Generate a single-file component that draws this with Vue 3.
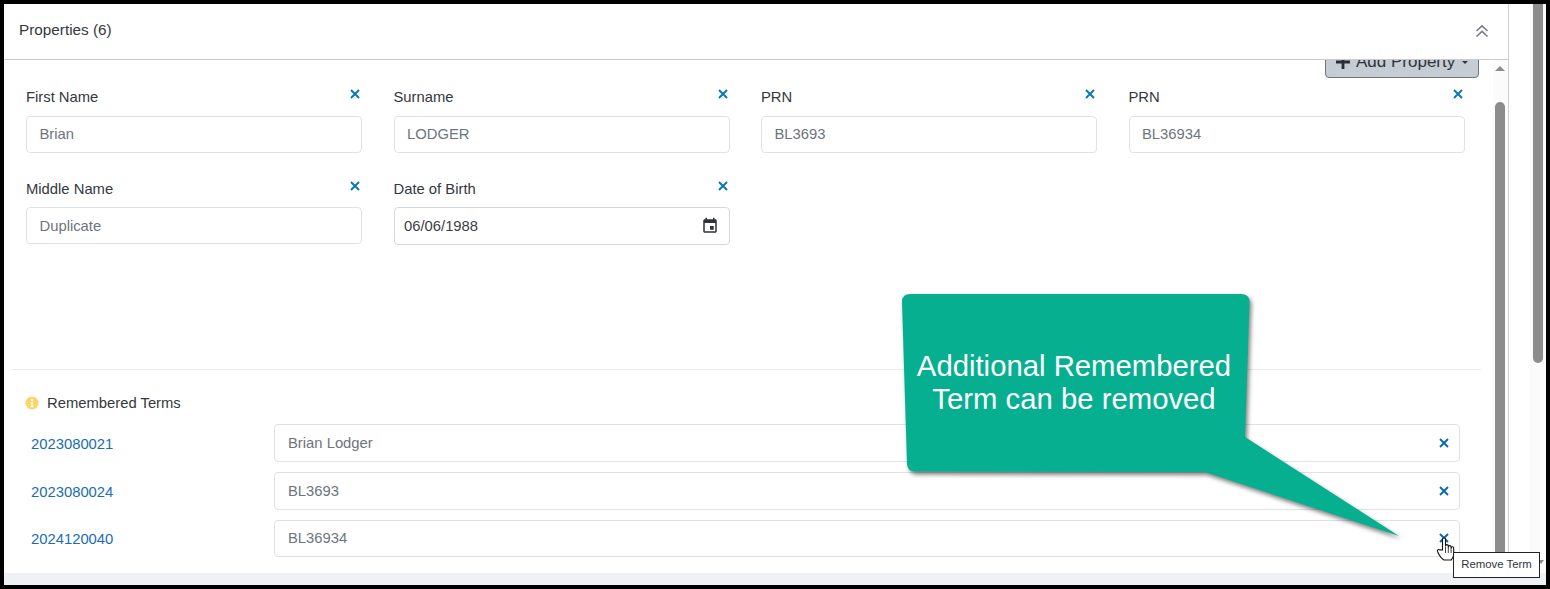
<script setup>
const fields = [
  { label: 'First Name', value: 'Brian' },
  { label: 'Surname', value: 'LODGER' },
  { label: 'PRN', value: 'BL3693' },
  { label: 'PRN', value: 'BL36934' },
  { label: 'Middle Name', value: 'Duplicate' },
  { label: 'Date of Birth', value: '06/06/1988', date: true }
]
const terms = [
  { id: '2023080021', value: 'Brian Lodger' },
  { id: '2023080024', value: 'BL3693' },
  { id: '2024120040', value: 'BL36934' }
]
</script>

<template>
  <div class="frame">
    <div class="top">
      <section class="panel">
        <header class="head">
          <span class="title">Properties (6)</span>
          <svg class="chev" width="14" height="14" viewBox="0 0 14 14" fill="none" stroke="#7a7f85" stroke-width="1.6">
            <path d="M1.5 7 7 1.8 12.5 7" />
            <path d="M1.5 12.5 7 7.3 12.5 12.5" />
          </svg>
        </header>
        <div class="body">
          <div class="content">
            <div class="tools">
              <button class="add">
                <svg width="14" height="14" viewBox="0 0 14 14"><path d="M5.6 0h2.8v5.6H14v2.8H8.4V14H5.6V8.4H0V5.6h5.6z" fill="#2b2f33" /></svg>
                <span>Add Property</span>
                <i class="caret"></i>
              </button>
            </div>
            <div class="grid">
              <div v-for="(f, i) in fields" :key="i" class="field">
                <div class="label">
                  <span>{{ f.label }}</span>
                  <svg class="x" width="10" height="10" viewBox="0 0 10 10"><path d="M1 1l8 8M9 1 1 9" stroke="#0a78b8" stroke-width="2" /></svg>
                </div>
                <div class="input" :class="{ date: f.date }">
                  <span>{{ f.value }}</span>
                  <svg v-if="f.date" width="18" height="18" viewBox="0 0 24 24"><path d="M17 12h-5v5h5v-5zM16 1v2H8V1H6v2H5c-1.11 0-1.99.9-1.99 2L3 19c0 1.1.89 2 2 2h14c1.1 0 2-.9 2-2V5c0-1.1-.9-2-2-2h-1V1h-2zm3 18H5V8h14v11z" fill="#2f3336" /></svg>
                </div>
              </div>
            </div>
            <hr class="rule" />
            <div class="terms-title">
              <svg width="14" height="14" viewBox="0 0 14 14">
                <circle cx="7" cy="7" r="6.5" fill="#ffd466" />
                <circle cx="7" cy="4" r="1.2" fill="#fff" />
                <path d="M5.6 6h2.2v4h.9v1.2H5.400V10h.9V7.100h-.7z" fill="#fff" />
              </svg>
              <span>Remembered Terms</span>
            </div>
            <div class="terms">
              <div v-for="t in terms" :key="t.id" class="term">
                <a class="link">{{ t.id }}</a>
                <div class="input term-input">
                  <span>{{ t.value }}</span>
                  <svg width="10" height="10" viewBox="0 0 10 10"><path d="M1 1l8 8M9 1 1 9" stroke="#0a6cae" stroke-width="2" /></svg>
                </div>
              </div>
            </div>
          </div>
          <div class="vbar">
            <i class="up"></i>
            <i class="thumb"></i>
          </div>
        </div>
      </section>
      <aside class="gutter">
        <i class="outer-thumb"></i>
        <i class="down"></i>
      </aside>
    </div>
    <div class="foot"></div>

    <svg class="callout" width="520" height="270" viewBox="900 290 520 270">
      <defs>
        <filter id="sh" x="-5%" y="-5%" width="115%" height="120%" color-interpolation-filters="sRGB">
          <feDropShadow dx="2" dy="3" stdDeviation="2.2" flood-color="#000" flood-opacity=".5" />
        </filter>
      </defs>
      <path d="M910 294H1241Q1249.500 294 1249.500 302L1245 437 1399 536 1205 472 915 471.500Q907.500 471.500 907 464L902 302Q902 294 910 294Z" fill="#07af91" filter="url(#sh)" />
    </svg>
    <div class="callout-text">Additional Remembered<br />Term can be removed</div>

    <svg class="hand" width="20" height="26" viewBox="0 0 20 26">
      <path d="M6.500 14V3.500a1.500 1.500 0 0 1 3 0V10a1.400 1.400 0 0 1 2.800 0v1a1.400 1.400 0 0 1 2.800 0v1a1.300 1.300 0 0 1 2.600 0v6c0 3-1 4.500-2.500 6H8C6 23 3.500 20 1.500 15.500c-.6-1.500 1-2.600 2.200-1.600z" fill="#fff" stroke="#111" stroke-width="1.100" stroke-linejoin="round" />
      <path d="M9.500 11v6M12.300 11v6M15.100 12v5" stroke="#111" stroke-width=".8" fill="none" />
    </svg>
    <div class="tip">Remove Term</div>
  </div>
</template>

<style>
html, body { margin: 0; background: #fff; }
</style>

<style scoped>
.frame {
  position: relative;
  box-sizing: border-box;
  width: 1550px;
  height: 589px;
  border: 4px solid #000;
  display: flex;
  flex-direction: column;
  overflow: hidden;
  background: #fff;
  font: 14.8px "Liberation Sans", Arial, sans-serif;
  color: #33383d;
}
.top { flex: 1; min-height: 0; display: flex; }
.panel {
  box-sizing: border-box;
  width: 1505px;
  border-right: 1px solid #c9d0da;
  display: flex;
  flex-direction: column;
}
.head {
  box-sizing: border-box;
  height: 56px;
  flex: none;
  padding: 0 19px 4px 15px;
  display: flex;
  align-items: center;
  justify-content: space-between;
  border-bottom: 1px solid #c8ccd2;
  position: relative;
  z-index: 1;
  background: #fff;
}
.title { font-size: 15.300px; }
.chev { margin-top: 2px; }
.body { flex: 1; min-height: 0; display: flex; overflow: hidden; }
.content { width: 1489px; flex: none; }
.tools { display: flex; justify-content: flex-end; padding-right: 14px; margin-top: -16px; }
.add {
  box-sizing: border-box;
  width: 154px;
  height: 34px;
  display: flex;
  align-items: center;
  gap: 6px;
  padding: 2px 0 0 10px;
  background: #c6ccd4;
  border: 1px solid #6f7680;
  border-radius: 4px;
  font: 17px "Liberation Sans", Arial, sans-serif;
  color: #30353a;
}
.caret {
  border: 3px solid transparent;
  border-top-color: #30353a;
  border-bottom: 0;
  margin-left: 1px;
}
.grid {
  margin: 7px 28.500px 0 22px;
  display: grid;
  grid-template-columns: repeat(4, 336px);
  column-gap: 31.500px;
  row-gap: 24px;
}
.label {
  height: 24px;
  margin-bottom: 6.500px;
  display: flex;
  justify-content: space-between;
  align-items: center;
  padding-right: 2px;
}
.label .x { align-self: flex-start; margin-top: 4px; }
.input {
  box-sizing: border-box;
  height: 37px;
  padding: 0 13px 0 12.500px;
  border: 1px solid #dfe2e6;
  border-radius: 4px;
  display: flex;
  align-items: center;
  justify-content: space-between;
  color: #6c757d;
  background: #fff;
}
.date { height: 38px; padding: 0 10px 0 9.500px; color: #3a3f44; border-color: #d6d9dc; }
.rule { margin: 124px 12px 0 7px; border: 0; border-top: 1px solid #e9ebee; height: 0; }
.terms-title {
  display: flex;
  align-items: center;
  gap: 8px;
  margin: 24px 0 0 21px;
  height: 18px;
}
.terms {
  margin: 12px 33px 0 27px;
  display: flex;
  flex-direction: column;
  gap: 10px;
}
.term { display: flex; align-items: center; }
.link { width: 243px; flex: none; color: #1a6db5; padding-top: 1px; }
.term:last-child .link { padding-top: 0; }
.term-input { flex: 1; height: 38px; padding: 0 10px 0 13px; }
.term:last-child .term-input { height: 37px; padding-bottom: 1px; }
.vbar {
  flex: 1;
  background: #fbfbfb;
  display: flex;
  flex-direction: column;
  padding-left: 2px;
}
.up {
  display: block;
  width: 0;
  margin: 6px 0 0 0;
  border: 5px solid transparent;
  border-top: 0;
  border-bottom: 5px solid #8c8c8c;
}
.thumb {
  display: block;
  width: 10px;
  flex: 1;
  margin-top: 31px;
  background: #8c8c8c;
  border-radius: 5px 5px 0 0;
}
.gutter {
  flex: 1;
  display: flex;
  flex-direction: column;
  justify-content: space-between;
  padding-left: 24px;
  background: linear-gradient(90deg, #fff 21px, #fbfbfb 21px);
}
.outer-thumb {
  display: block;
  width: 10px;
  height: 359px;
  background: #8c8c8c;
  border-radius: 0 0 5px 5px;
}
.down {
  display: block;
  width: 0;
  margin: 0 0 9px 5px;
  border: 3px solid transparent;
  border-bottom: 0;
  border-top: 4px solid #8c8c8c;
}
.foot { height: 12px; flex: none; background: #eef2f5; }
.callout { position: absolute; left: 896px; top: 286px; pointer-events: none; }
.callout-text {
  position: absolute;
  left: 896px;
  top: 345px;
  width: 348px;
  text-align: center;
  color: #fff;
  font-size: 29.300px;
  line-height: 33px;
}
.hand { position: absolute; left: 1432px; top: 532px; }
.tip {
  position: absolute;
  left: 1449px;
  top: 548px;
  box-sizing: border-box;
  width: 87px;
  height: 26px;
  border: 1.500px solid #222;
  background: #fff;
  font-size: 11.400px;
  line-height: 23px;
  text-align: center;
  color: #30353a;
}
</style>
